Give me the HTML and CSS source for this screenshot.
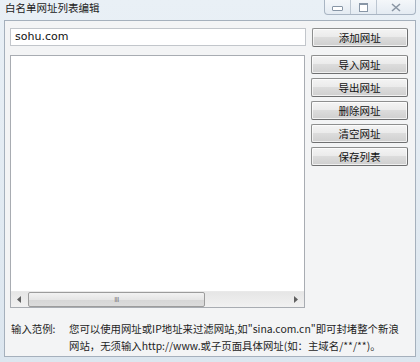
FILE: index.html
```html
<!DOCTYPE html>
<html lang="zh-CN">
<head>
<meta charset="utf-8">
<title>白名单网址列表编辑</title>
<link rel="stylesheet" href="styles.css">
</head>
<body>
<div class="window">
  <div class="titlebar">
    <span class="title">白名单网址列表编辑</span>
    <div class="controls">
      <span class="ctl min"><span class="min-bar"></span></span>
      <span class="ctl max"><span class="max-box"></span></span>
      <span class="ctl close">
        <svg width="10" height="9" viewBox="0 0 10 9"><path d="M1 1 L9 8 M9 1 L1 8" stroke="#8a96a4" stroke-width="1.6" fill="none"/></svg>
      </span>
    </div>
  </div>
  <div class="client">
    <div class="top-row">
      <div class="textbox">sohu.com</div>
      <button class="btn">添加网址</button>
    </div>
    <div class="mid-row">
      <div class="listbox">
        <div class="list-area"></div>
        <div class="hscroll">
          <span class="arrow">
            <svg width="4" height="7" viewBox="0 0 4 7"><path d="M4 0 L0 3.5 L4 7 Z" fill="#606060"/></svg>
          </span>
          <div class="track">
            <div class="thumb"><span class="grip">III</span></div>
          </div>
          <span class="arrow">
            <svg width="4" height="7" viewBox="0 0 4 7"><path d="M0 0 L4 3.5 L0 7 Z" fill="#606060"/></svg>
          </span>
        </div>
      </div>
      <div class="btn-col">
        <button class="btn">导入网址</button>
        <button class="btn">导出网址</button>
        <button class="btn">删除网址</button>
        <button class="btn">清空网址</button>
        <button class="btn">保存列表</button>
      </div>
    </div>
    <div class="note">
      <span class="note-label">输入范例:</span>
      <span class="note-text">您可以使用网址或IP地址来过滤网站,如"sina.com.cn"即可封堵整个新浪网站，无须输入http://www.或子页面具体网址(如：主域名/**/**)。</span>
    </div>
  </div>
</div>
</body>
</html>
```

FILE: styles.css
```css
html, body {
  margin: 0;
  padding: 0;
  background: #dfe8f1;
}
body {
  font-family: "Noto Sans CJK SC", "Liberation Sans", sans-serif;
  font-size: 11px;
  color: #1a1a1a;
}
.window {
  width: 420px;
  height: 362px;
  box-sizing: border-box;
  background: linear-gradient(to bottom, #e9f0f6 0%, #dce6ef 100%);
  display: flex;
  flex-direction: column;
  overflow: hidden;
}
.titlebar {
  height: 20px;
  display: flex;
  justify-content: space-between;
  align-items: flex-start;
  padding-left: 5px;
  padding-right: 3px;
}
.title {
  font-size: 10.5px;
  line-height: 11px;
  margin-top: 2px;
  color: #222;
}
.controls {
  display: flex;
  height: 14px;
  border: 1px solid #a9b5c3;
  border-top: none;
  border-radius: 0 0 4px 4px;
  background: linear-gradient(to bottom, #f4f7fa, #e4ebf2);
  margin-right: 1px;
}
.ctl {
  display: flex;
  align-items: center;
  justify-content: center;
  height: 14px;
}
.min, .max {
  width: 25px;
  border-right: 1px solid #bcc6d1;
}
.close {
  width: 38px;
}
.min-bar {
  width: 9px;
  height: 3px;
  border: 1px solid #8896a6;
  border-radius: 1px;
  margin-top: 3px;
  background: #fff;
}
.max-box {
  width: 7px;
  height: 6px;
  border: 1px solid #8896a6;
  border-top-width: 2px;
  background: #fff;
}
.client {
  margin: 0 4px;
  height: 337px;
  box-sizing: border-box;
  border: 1px solid #a5b0bc;
  background: #f3f4f5;
  padding: 7px 7px 0 5px;
}
.top-row {
  display: flex;
  gap: 6px;
  align-items: flex-start;
}
.textbox {
  width: 293px;
  height: 16px;
  box-sizing: content-box;
  border: 1px solid #c2c6cb;
  background: #fff;
  font-family: "DejaVu Sans", "Liberation Sans", sans-serif;
  font-size: 11px;
  line-height: 16px;
  padding-left: 4px;
  color: #111;
}
.textbox { width: 291px; }
.btn {
  width: 97px;
  height: 19px;
  margin: 0;
  padding: 0;
  border: 1px solid #8e8f8f;
  border-right-color: #6d6e6f;
  border-bottom-color: #6f7071;
  border-radius: 2px;
  background: linear-gradient(to bottom, #f4f4f4 0%, #ebebeb 45%, #dcdcdc 50%, #cfcfcf 100%);
  font-family: "Noto Sans CJK SC", sans-serif;
  font-size: 10.5px;
  line-height: 16px;
  color: #111;
  box-shadow: inset 0 0 0 1px rgba(255,255,255,0.7);
}
.mid-row {
  display: flex;
  gap: 6px;
  margin-top: 8px;
  align-items: flex-start;
}
.listbox {
  width: 294px;
  height: 251px;
  border: 1px solid #a8acb2;
  background: #fff;
  display: flex;
  flex-direction: column;
}
.list-area {
  flex: 1;
}
.hscroll {
  height: 15px;
  display: flex;
  align-items: stretch;
  background: linear-gradient(to bottom, #e6e6e6, #f1f1f1);
  border-top: 1px solid #e9e9e9;
}
.arrow {
  width: 16px;
  display: flex;
  align-items: center;
  justify-content: center;
}
.track {
  flex: 1;
  padding: 0 0 0 1px;
  display: flex;
}
.thumb {
  width: 177px;
  box-sizing: border-box;
  height: 15px;
  border: 1px solid #9c9c9c;
  border-radius: 2px;
  background: linear-gradient(to bottom, #f2f2f2 0%, #e6e6e6 50%, #d6d6d6 51%, #dcdcdc 100%);
  display: flex;
  align-items: center;
  justify-content: center;
}
.grip {
  font-family: "Liberation Sans", sans-serif;
  font-size: 7px;
  letter-spacing: -0.5px;
  color: #777;
  line-height: 8px;
}
.btn-col {
  display: flex;
  flex-direction: column;
  gap: 4px;
}
.note {
  display: flex;
  margin-top: 12px;
  padding-left: 1px;
  font-size: 10.4px;
  line-height: 17px;
  color: #1e1e1e;
}
.note-label {
  width: 58px;
  flex: none;
}
.note-text {
  width: 330px;
}
```
